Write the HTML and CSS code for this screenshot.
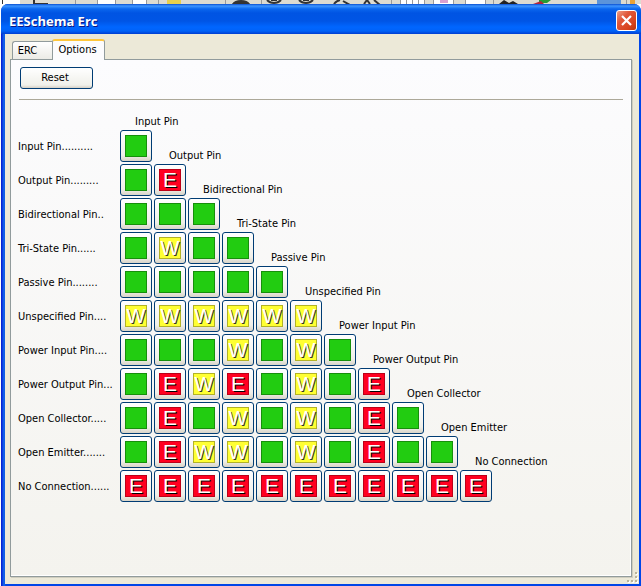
FILE: index.html
```html
<!DOCTYPE html>
<html lang="en">
<head>
<meta charset="utf-8">
<title>EESchema Erc</title>
<link rel="stylesheet" href="styles.css">
</head>
<body>
<div class="backdrop" aria-hidden="true">
  <svg width="641" height="6" viewBox="0 0 641 6">
    <path fill="#fff" d="M0 0h20v6H0z"/>
    <path fill="#fff" stroke="#999" d="M97.500-1h18v8h-18zM132.500-1h14v8h-14zM400.500-1h24v8h-24zM433.500-1h20v8h-20zM465.500-1h20v8h-20z"/>
    <path stroke="#999" fill="none" d="M406.500 0v6M412.500 0v6M418.500 0v6M75.500 0v6M158.500 0v6M225.500 0v6M261.500 0v6M391.500 0v6M493.500 0v6M626.500 0v6"/>
    <path fill="#333" d="M2 0h1v6h-1zM33 0h2v3h13v1h-15zM231 6q2-6 10-6t10 6z"/>
    <path fill="none" stroke="#333" stroke-width="2" d="M267 0q3 3 7 3t7-3M271 0h6M299 0q3 3 7 3t7-3M303 0h6M334 4q2-3 6-4M343 1l7 4M364 4l3-4 3 4M374 0l6 5"/>
    <path fill="#e8d04c" d="M167 0h14v4h-14z"/>
    <path fill="#5b94da" d="M597 0h24v4h-24z"/>
    <path fill="#d9a0d0" d="M440 0h8v3h-8z"/>
    <path fill="#279b33" d="M539 0h12l-4 3h-8z"/>
    <path fill="#b2273a" d="M533 4l8-3 3 3z"/>
    <path fill="#222" d="M499 4l5-4 5 3 4-2 5 3z"/>
    <path fill="#eaa336" d="M630 0h5v4h-5z"/>
  </svg>
</div>
<main class="window">
  <header class="titlebar">
    <h1>EESchema Erc</h1>
    <button class="close" type="button" aria-label="Close">
      <svg width="21" height="21" viewBox="0 0 21 21"><path d="M6 6l9 9M15 6l-9 9" fill="none" stroke="#fff" stroke-width="2.200"/></svg>
    </button>
  </header>
  <div class="client">
    <div class="tabs" role="tablist">
      <button class="tab" type="button" role="tab" aria-selected="false">ERC</button>
      <button class="tab active" type="button" role="tab" aria-selected="true">Options</button>
    </div>
    <section class="panel" role="tabpanel">
      <button class="reset" type="button">Reset</button>
      <hr>
      <table class="matrix">
        <colgroup><col class="label-col"><col span="12" class="cell-col"></colgroup>
        <tbody id="matrix"></tbody>
      </table>
    </section>
    <svg class="grip" width="11" height="11" viewBox="0 0 11 11" aria-hidden="true">
      <path fill="#fff" d="M9 1h2v2h-2zM9 5h2v2h-2zM9 9h2v2h-2zM5 9h2v2h-2zM1 9h2v2h-2z"/>
      <path fill="#b8b49c" d="M8 0h2v2h-2zM8 4h2v2h-2zM8 8h2v2h-2zM4 8h2v2h-2zM0 8h2v2h-2z"/>
    </svg>
  </div>
</main>
<script src="matrix.js"></script>
</body>
</html>
```
FILE: styles.css
```css
* { box-sizing: border-box; }

body {
  margin: 0;
  min-height: 100vh;
  display: flex;
  flex-direction: column;
  background: #fff;
  color: #000;
  font: 11px/14px "DejaVu Sans Condensed", "DejaVu Sans", sans-serif;
}

button { margin: 0; padding: 0; font: inherit; color: inherit; }

.backdrop { height: 4px; background: #dddbd0; overflow: hidden; }
.backdrop svg { display: block; }

.window {
  flex: 1;
  display: flex;
  flex-direction: column;
  margin-left: 1px;
  padding: 0 2px 2px 4px;
  border-radius: 7px 7px 0 0;
  background: linear-gradient(90deg, #0019cf 0, #0831d9 1px, #166aee 3px, #0855dd 4px, #0046e8 5px);
}

.titlebar {
  display: flex;
  align-items: center;
  justify-content: space-between;
  height: 30px;
  margin: 0 -2px 0 -4px;
  padding: 3px 4px 0 8px;
  border-radius: 7px 7px 0 0;
  background: linear-gradient(#0a4fd0 0, #3d95ff 2px, #0a66ee 5px, #0054e3 9px, #0055e5 17px, #0066ff 23px, #0062f8 27px, #003dd0 30px);
}
.titlebar h1 {
  margin: 0;
  color: #fff;
  font: bold 13px/16px "Open Sans", "DejaVu Sans Condensed", sans-serif;
  text-shadow: 1px 1px 0 #0a1883;
}

.close {
  width: 21px;
  height: 21px;
  border: 1px solid #fff;
  border-radius: 3px;
  background: linear-gradient(135deg, #f0a086 0, #e0583a 35%, #d8431c 75%, #b8350c 100%);
}
.close svg { display: block; margin: -1px; }

.client {
  flex: 1;
  display: flex;
  flex-direction: column;
  position: relative;
  padding: 5px 7px 7px 5px;
  background: #ece9d8;
}

.tabs { display: flex; align-items: flex-end; margin-left: 2px; }
.tab {
  height: 18px;
  width: 40px;
  padding-right: 10px;
  border: 1px solid #919b9c;
  border-width: 1px 0 0 1px;
  border-radius: 3px 0 0 0;
  background: linear-gradient(#fff, #ecebe6);
}
.tab.active {
  height: 21px;
  width: 53px;
  padding: 0 2px 1px 0;
  margin-bottom: -1px;
  position: relative;
  border: 1px solid #919b9c;
  border-top: 2px solid #ffc73c;
  border-bottom: 0;
  border-radius: 3px 3px 0 0;
  background: #fcfcfe;
}

.panel {
  flex: 1;
  padding: 7px 8px 8px;
  border: 1px solid #919b9c;
  background: linear-gradient(#fcfcfe, #f4f3ee);
  box-shadow: 1px 1px 0 #d0cebf, inset -1px -1px 0 #fff;
}
.reset {
  display: block;
  width: 73px;
  height: 22px;
  margin-left: 1px;
  padding-right: 3px;
  border: 1px solid #003c74;
  border-radius: 3px;
  background: linear-gradient(#fff, #f0f0ea 85%, #d6d0c5);
}
.panel hr { height: 1px; margin: 10px 0 12px; border: 0; background: #aca899; }

.matrix { table-layout: fixed; width: 508px; border-collapse: separate; border-spacing: 2px; margin-left: -3px; }
.label-col { width: 100px; }
.cell-col { width: 32px; }
.matrix th, .matrix td { padding: 0; font-weight: normal; text-align: left; white-space: nowrap; }
.matrix th[scope="row"] { padding-top: 2px; }
.matrix th[scope="col"] { padding-left: 15px; vertical-align: bottom; line-height: 12px; }
.matrix tr:first-child { height: 14px; }

.pin {
  display: grid;
  place-items: center;
  width: 32px;
  height: 32px;
  border: 1px solid #003c74;
  border-radius: 3px;
  background: linear-gradient(#fff, #f0efe9 80%, #d9d4c8);
}
.mark {
  display: grid;
  place-content: center;
  width: 22px;
  height: 22px;
  border: 1px solid;
  font: 21px/24px "Liberation Sans", sans-serif;
  color: #fff;
}
.ok { background: #22cc11; border-color: #168f0b; }
.error { background: #ff0020; border-color: #bd0018; text-shadow: 1px 1px 0 #000; }
.warn { background: #ffff33; border-color: #b2b226; font-size: 20px; text-shadow: 1px 1px 0 #333; }

.grip { position: absolute; right: 1px; bottom: 1px; }
```
FILE: matrix.js
```js
const pins = [
  ["Input Pin", ".........."],
  ["Output Pin", "........."],
  ["Bidirectional Pin", ".."],
  ["Tri-State Pin", "......"],
  ["Passive Pin", "........"],
  ["Unspecified Pin", "...."],
  ["Power Input Pin", "...."],
  ["Power Output Pin", "..."],
  ["Open Collector", "....."],
  ["Open Emitter", "......."],
  ["No Connection", "......"]
];

// One letter per button: O = allowed, W = warning, E = error.
const rules = [
  "O", "OE", "OOO", "OWOO", "OOOOO", "WWWWWW", "OOOWOWO",
  "OEWEOWOE", "OEOWOWOEO", "OEWWOWOEOO", "EEEEEEEEEEE"
];
const kinds = { O: ["ok", "", "allowed"], W: ["warn", "W", "warning"], E: ["error", "E", "error"] };

const colHead = i => pins[i] ? `<th scope="col">${pins[i][0]}</th>` : "";

document.getElementById("matrix").innerHTML =
  `<tr><td></td>${colHead(0)}</tr>` +
  rules.map((row, r) => {
    const cells = [...row].map((k, c) => {
      const [cls, text, state] = kinds[k];
      return `<td><button class="pin" type="button" aria-label="${pins[r][0]} to ${pins[c][0]}: ${state}"><span class="mark ${cls}">${text}</span></button></td>`;
    }).join("");
    return `<tr><th scope="row">${pins[r].join("")}</th>${cells}${colHead(r + 1)}</tr>`;
  }).join("");
```
